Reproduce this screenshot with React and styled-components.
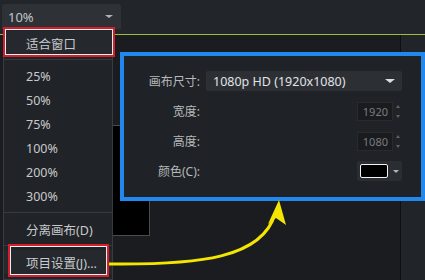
import styled, { createGlobalStyle } from "styled-components";

const GlobalStyle = createGlobalStyle`
  html, body {
    margin: 0;
    padding: 0;
    background: #1b1d21;
  }
`;

const Screen = styled.div`
  position: relative;
  width: 425px;
  height: 280px;
  overflow: hidden;
  display: flex;
  flex-direction: column;
  background: #1b1d21;
  font-family: "Noto Sans", "Noto Sans CJK SC", sans-serif;
`;

const TopBar = styled.div`
  flex-shrink: 0;
  height: 35px;
  box-sizing: border-box;
  padding: 4px 0 0 2px;
  background: #22262b;
  border-bottom: 1px solid #9fbd3c;
`;

const Caret = styled.span`
  width: 0;
  height: 0;
  border-left: ${(p) => p.$size || 4}px solid transparent;
  border-right: ${(p) => p.$size || 4}px solid transparent;
  border-top: ${(p) => Math.round((p.$size || 4) * 0.75)}px solid ${(p) => p.$color || "#b0b3b8"};
`;

const ZoomSelect = styled.div`
  width: 119px;
  height: 25px;
  box-sizing: border-box;
  display: flex;
  align-items: center;
  justify-content: space-between;
  padding: 0 8px 0 6px;
  background: #2e3237;
  border-radius: 3px 3px 0 0;
  color: #c4c6c8;
  font-size: 13px;
`;

const Workspace = styled.div`
  flex: 1;
  display: flex;
  min-height: 0;
`;

const Stage = styled.div`
  flex: 1;
  padding: 90px 0 0 40px;
  background: #1a1c1f;
`;

const CanvasBox = styled.div`
  width: 110px;
  height: 111px;
  box-sizing: border-box;
  background: #000;
  border: 1px solid #4a4b4d;
`;

const SidePanel = styled.div`
  width: 24px;
  background: #212429;
  border-left: 1px solid #0e0f11;
`;

const Menu = styled.div`
  position: absolute;
  left: 3px;
  top: 29px;
  bottom: 0;
  width: 110px;
  box-sizing: border-box;
  padding-top: 2px;
  background: #202327;
  border: 1px solid #383b41;
  border-top: none;
  z-index: 2;
`;

const MenuItem = styled.div`
  position: relative;
  height: 24px;
  display: flex;
  align-items: center;
  padding-left: 22px;
  font-size: 12.5px;
  color: #c8c9cb;
  background: ${(p) => (p.$active ? "#25292e" : "transparent")};
`;

const Separator = styled.div`
  height: 1px;
  margin: 4px 0;
  background: #363940;
`;

const Mark = styled.span`
  position: absolute;
  top: ${(p) => p.$t}px;
  bottom: ${(p) => p.$b}px;
  left: ${(p) => p.$l}px;
  right: ${(p) => p.$r}px;
  border: 2px solid #d21f2b;
  box-shadow: inset 0 0 0 1px #f2f2f2;
`;

const SettingsPanel = styled.div`
  position: absolute;
  left: 120px;
  top: 52px;
  width: 305px;
  height: 149px;
  box-sizing: border-box;
  border: 4px solid #2188ef;
  background: #1f2226;
  padding: 15px 0 0 0;
  display: grid;
  grid-template-columns: 76px 196px;
  grid-auto-rows: 20px;
  column-gap: 6px;
  row-gap: 10px;
  align-items: center;
  z-index: 1;
`;

const Label = styled.div`
  text-align: right;
  font-size: 12px;
  color: #b7b9bc;
`;

const SizeSelect = styled.div`
  height: 20px;
  box-sizing: border-box;
  display: flex;
  align-items: center;
  justify-content: space-between;
  padding: 0 7px 0 7px;
  background: #2c3035;
  border-radius: 2px;
  font-size: 12.5px;
  color: #e2e3e5;
`;

const NumberField = styled.div`
  justify-self: end;
  display: flex;
  align-items: center;
  gap: 1px;
`;

const NumberBox = styled.div`
  width: 36px;
  height: 19px;
  box-sizing: border-box;
  padding-right: 4px;
  background: #191b1e;
  border: 1px solid #272a2e;
  font-size: 11px;
  line-height: 17px;
  text-align: right;
  color: #7b7d80;
`;

const Spinner = styled.div`
  width: 8px;
  height: 19px;
  display: flex;
  flex-direction: column;
  align-items: center;
  justify-content: space-between;
  padding: 3px 0;
  box-sizing: border-box;
`;

const SpinUp = styled.span`
  width: 0;
  height: 0;
  border-left: 2.5px solid transparent;
  border-right: 2.5px solid transparent;
  border-bottom: 3px solid #5e6166;
`;

const SpinDown = styled.span`
  width: 0;
  height: 0;
  border-left: 2.5px solid transparent;
  border-right: 2.5px solid transparent;
  border-top: 3px solid #5e6166;
`;

const ColorButton = styled.div`
  justify-self: end;
  width: 45px;
  height: 20px;
  box-sizing: border-box;
  display: flex;
  align-items: center;
  gap: 5px;
  padding-left: 3px;
  background: #2a2d32;
  border-radius: 2px;
`;

const Swatch = styled.span`
  width: 28px;
  height: 14px;
  box-sizing: border-box;
  background: #000;
  border: 1.5px solid #f2f2f2;
  border-radius: 2px;
`;

const Overlay = styled.svg`
  position: absolute;
  left: 0;
  top: 0;
  z-index: 3;
  pointer-events: none;
`;

function NumberInput({ value }) {
  return (
    <NumberField>
      <NumberBox>{value}</NumberBox>
      <Spinner>
        <SpinUp />
        <SpinDown />
      </Spinner>
    </NumberField>
  );
}

export default function App() {
  return (
    <Screen>
      <GlobalStyle />
      <TopBar>
        <ZoomSelect>
          10%
          <Caret $size={4} />
        </ZoomSelect>
      </TopBar>
      <Workspace>
        <Stage>
          <CanvasBox />
        </Stage>
        <SidePanel />
      </Workspace>

      <Menu>
        <MenuItem $active>
          适合窗口
          <Mark $t={-4} $b={-2} $l={-1} $r={-3} />
        </MenuItem>
        <Separator />
        <MenuItem>25%</MenuItem>
        <MenuItem>50%</MenuItem>
        <MenuItem>75%</MenuItem>
        <MenuItem>100%</MenuItem>
        <MenuItem>200%</MenuItem>
        <MenuItem>300%</MenuItem>
        <Separator />
        <MenuItem>分离画布(D)</MenuItem>
        <Separator />
        <MenuItem $active>
          项目设置(J)...
          <Mark $t={-6} $b={-3} $l={4} $r={3} />
        </MenuItem>
      </Menu>

      <SettingsPanel>
        <Label>画布尺寸:</Label>
        <SizeSelect>
          1080p HD (1920x1080)
          <Caret $size={5} $color="#dcdde0" />
        </SizeSelect>
        <Label>宽度:</Label>
        <NumberInput value="1920" />
        <Label>高度:</Label>
        <NumberInput value="1080" />
        <Label>颜色(C):</Label>
        <ColorButton>
          <Swatch />
          <Caret $size={3.5} />
        </ColorButton>
      </SettingsPanel>

      <Overlay width="425" height="280" viewBox="0 0 425 280">
        <path
          d="M 109 264 C 200 265, 262 258, 275 214"
          fill="none"
          stroke="#f4e600"
          strokeWidth="3"
        />
        <polygon points="279,200 268,224 276,218 286,225" fill="#f4e600" />
      </Overlay>
    </Screen>
  );
}
